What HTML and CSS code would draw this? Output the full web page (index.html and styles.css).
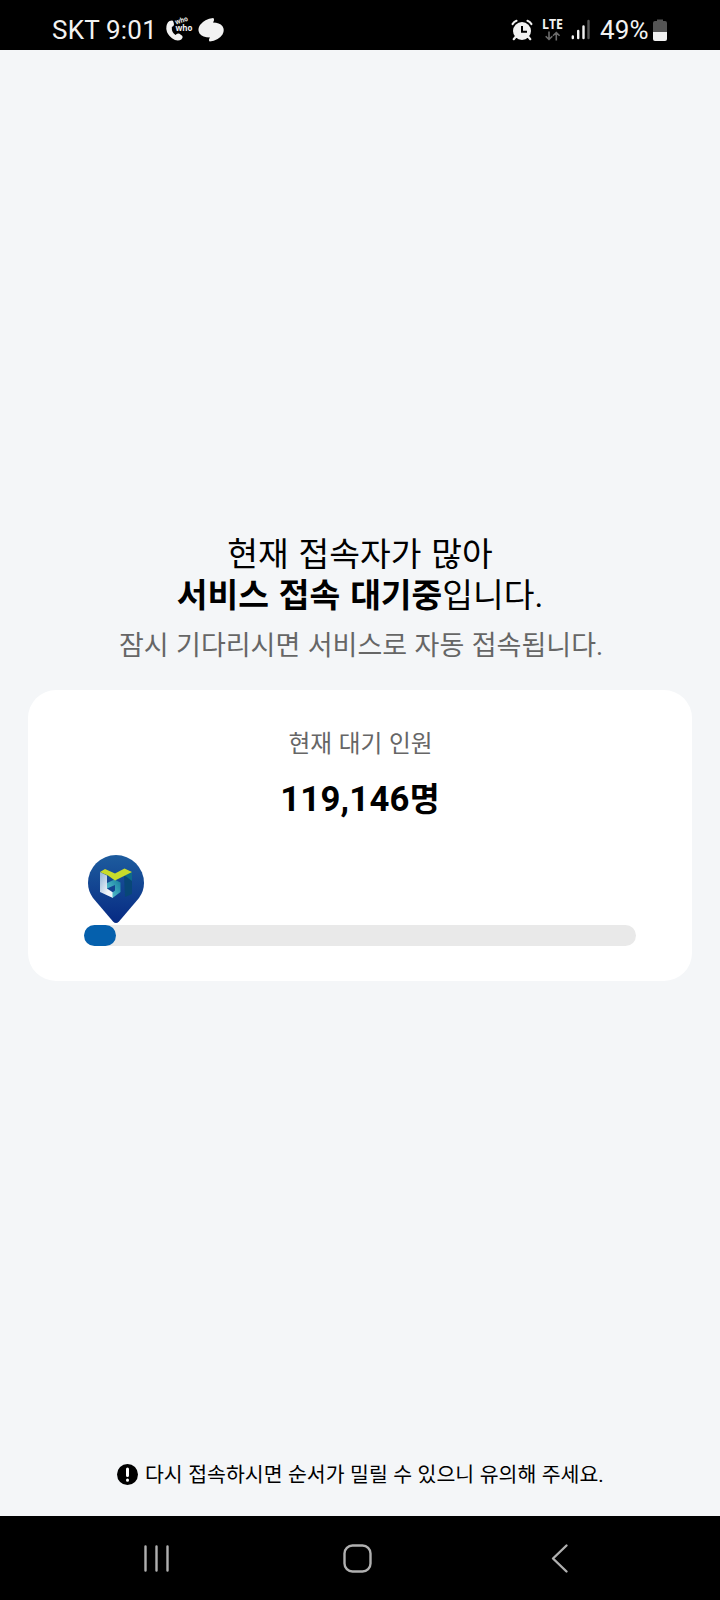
FILE: index.html
```html
<!DOCTYPE html>
<html lang="ko">
<head>
<meta charset="utf-8">
<title>서비스 접속 대기</title>
<link rel="stylesheet" href="styles.css">
</head>
<body>
<div class="screen">
  <header class="status">
    <span class="carrier">SKT 9:01</span>
    <svg class="who" width="28" height="26" viewBox="0 0 28 26">
      <path d="M3.500 4 6 3.500Q7.500 3.500 8 7.500 8 9 5.800 10 5.500 15.500 9.500 18 11.500 16.200 13.500 16.700L16.400 19Q17.300 20.600 15.300 22.500 11 25 6 21.200 1 17.500 .300 12 0 6.300 3.500 4Z"/>
      <text class="who-text small" x="10" y="7.500" transform="rotate(-18 10 7.5)" textLength="13" lengthAdjust="spacingAndGlyphs">who</text>
      <text class="who-text" x="9.500" y="14" textLength="17" lengthAdjust="spacingAndGlyphs">who</text>
    </svg>
    <svg class="blob" width="28" height="26" viewBox="0 0 28 26">
      <path d="M16.200 1Q7.500 2 3 8 0 12.500 2.500 16.500 5.500 20.500 13 20.500 11 23 12.700 24.500 21.500 23.500 25.500 17.500 28 13 25.500 9.200 22.500 5.500 16 5.500 18 2.500 16.200 1Z"/>
    </svg>
    <svg class="alarm" width="22" height="24" viewBox="0 0 22 24">
      <circle cx="11" cy="13" r="9"/>
      <path class="bells" d="M1.6 6Q3 3.6 5.5 2.8M16.5 2.8Q19 3.6 20.4 6"/>
      <path class="feet" d="m4.5 19-1.8 2.2m14.8-2.2 1.8 2.2"/>
      <path class="hands" d="M11 8v5.8h5"/>
    </svg>
    <svg class="lte" width="22" height="26" viewBox="0 0 22 26">
      <text class="lte-text" x="0" y="12" textLength="21" lengthAdjust="spacingAndGlyphs">LTE</text>
      <path d="M7 14.5v8m-3.3-3.2L7 22.5l3.3-3.2M14.3 23.5v-8M11 18.7l3.3-3.2 3.3 3.2"/>
    </svg>
    <svg class="signal" width="20" height="22" viewBox="0 0 20 22">
      <path d="M1.8 17.5V19M7.2 12v7M12.5 7.5V19"/>
      <path class="weak" d="M17.5 2v17"/>
    </svg>
    <span class="percent">49%</span>
    <svg class="battery" width="14" height="24" viewBox="0 0 14 24">
      <path class="empty" d="M4 3V1.5h6V3h2q2 0 2 2v9H0V5q0-2 2-2Z"/>
      <path d="M0 14h14v7q0 2-2 2H2q-2 0-2-2Z"/>
    </svg>
  </header>

  <main class="content">
    <h1 class="title">현재 접속자가 많아<br><strong>서비스 접속 대기중</strong>입니다.</h1>
    <p class="subtitle">잠시 기다리시면 서비스로 자동 접속됩니다.</p>
    <section class="card">
      <p class="label">현재 대기 인원</p>
      <p class="count">119,146<span class="unit">명</span></p>
      <svg class="pin" width="56" height="69" viewBox="0 0 56 69">
        <defs>
          <linearGradient id="pin" x2="0" y2="1"><stop stop-color="#1d5c9e"/><stop offset="1" stop-color="#072a83"/></linearGradient>
          <linearGradient id="silver" x2="1" y2="1"><stop stop-color="#8fb2d6"/><stop offset=".7" stop-color="#f2f6fa"/></linearGradient>
          <linearGradient id="teal" x1="1" x2="0" y2="1"><stop stop-color="#16809f"/><stop offset="1" stop-color="#62cbd6"/></linearGradient>
        </defs>
        <path fill="url(#pin)" d="M28 0A28 28 0 0 1 56 28Q56 36 51 43L31 66.5Q28 69.5 25 66.5L5 43Q0 36 0 28A28 28 0 0 1 28 0Z"/>
        <path fill="#084777" d="m36 20 8-3v22l-7 3Z"/>
        <path fill="#0d6b8a" d="m36 20 8-3v9Z"/>
        <path fill="url(#silver)" d="m12 17 7 3.5v13l6 4V43L12 37Z"/>
        <path fill="url(#teal)" d="m19 28 7.500-3.500 6 3V37L24.500 43v-5.500l2.500-2V30l-8 3.500Z"/>
        <path fill="#c8dc2b" d="m12 17 5-3 10 4.500 9.500-5 7.500 3.500L27 25.500l-7-5Z"/>
      </svg>
      <div class="track"><div class="fill"></div></div>
    </section>
  </main>

  <p class="notice">
    <svg width="21" height="21" viewBox="0 0 21 21"><circle cx="10.5" cy="10.5" r="10.5"/><path d="M10.5 5v6.5M10.5 16v.2"/></svg>
    <span>다시 접속하시면 순서가 밀릴 수 있으니 유의해 주세요.</span>
  </p>

  <nav class="nav">
    <svg class="recents" width="28" height="30" viewBox="0 0 28 30"><path d="M3.500 2.500v24M14.500 2.500v24M25.500 2.500v24"/></svg>
    <svg class="home" width="30" height="30" viewBox="0 0 30 30"><rect x="2.500" y="1.500" width="26" height="26" rx="8"/></svg>
    <svg class="back" width="20" height="30" viewBox="0 0 20 30"><path d="M16.500 1.500 3 14.500l13.500 13"/></svg>
  </nav>
</div>
</body>
</html>
```
FILE: styles.css
```css
* { box-sizing: border-box; }
body, h1, p { margin: 0; }
body { background: #f4f6f8; font-family: Roboto, "Noto Sans CJK KR", sans-serif; color: #000; }
svg { display: block; flex: none; overflow: visible; }

.screen { display: flex; flex-direction: column; width: 720px; height: 1600px; }

.status { display: flex; align-items: flex-start; height: 50px; padding: 15px 0 0 52px; background: #000; color: #f2f2f2; fill: #f2f2f2; white-space: nowrap; }
.carrier { width: 114px; font-size: 26px; line-height: 30px; letter-spacing: .2px; }
.who { margin-top: 2px; }
.blob { margin: 2px 0 0 3px; }
.who-text { font: 700 8px "Open Sans", sans-serif; }
.who-text.small { font-size: 7px; }
.alarm { margin: 3px 0 0 286px; }
.bells, .feet { fill: none; stroke: #f2f2f2; stroke-width: 2.2; stroke-linecap: round; }
.hands { fill: none; stroke: #000; stroke-width: 2; }
.lte { margin-left: 9px; margin-top: 2px; }
.lte-text { font: 700 13.5px "Open Sans", sans-serif; }
.lte path { fill: none; stroke: #6c6c6c; stroke-width: 1.6; }
.signal { margin: 4px 0 0 7px; fill: none; stroke: #f2f2f2; stroke-width: 2.4; stroke-linecap: round; }
.signal .weak { stroke: #555; }
.percent { width: 53px; margin-left: 9px; font-size: 26px; line-height: 30px; letter-spacing: .2px; }
.battery { margin-top: 3px; }
.empty { fill: #555; }

.content { display: flex; flex-direction: column; flex: 1; padding: 484px 28px 0; text-align: center; }
.title { font-size: 33.4px; font-weight: 400; line-height: 41px; word-spacing: 1.6px; }
.title strong { font-weight: 700; }
.subtitle { margin: 11px 0 0 2px; color: #666; font-size: 27px; line-height: 38px; word-spacing: .8px; }
.card { height: 291px; margin-top: 25px; padding: 37px 56px 0; border-radius: 28px; background: #fff; }
.label { padding-left: 1px; color: #666; font-size: 23.7px; line-height: 34px; word-spacing: .8px; }
.count { height: 48px; margin-top: 14px; font-size: 34.7px; font-weight: 700; line-height: 48px; letter-spacing: .2px; }
.unit { font-size: 32.5px; }
.pin { margin: 32px 0 0 4px; }
.track { height: 21px; margin-top: 1px; border-radius: 11px; background: #e9e9e9; }
.fill { width: 32px; height: 21px; border-radius: 11px; background: #0560ad; }

.notice { display: flex; align-items: center; gap: 7px; height: 30px; margin: 0 0 27px 117px; font-size: 20.5px; line-height: 30px; word-spacing: .4px; white-space: nowrap; }
.notice span { padding-top: 2px; }
.notice path { stroke: #fff; stroke-width: 3; stroke-linecap: round; }

.nav { display: flex; height: 84px; padding: 28px 0 0 142px; background: #000; fill: none; stroke: #b0b0b0; stroke-width: 2.4; stroke-linecap: round; stroke-linejoin: round; }
.home { margin-left: 172px; }
.back { margin-left: 178px; }
```
